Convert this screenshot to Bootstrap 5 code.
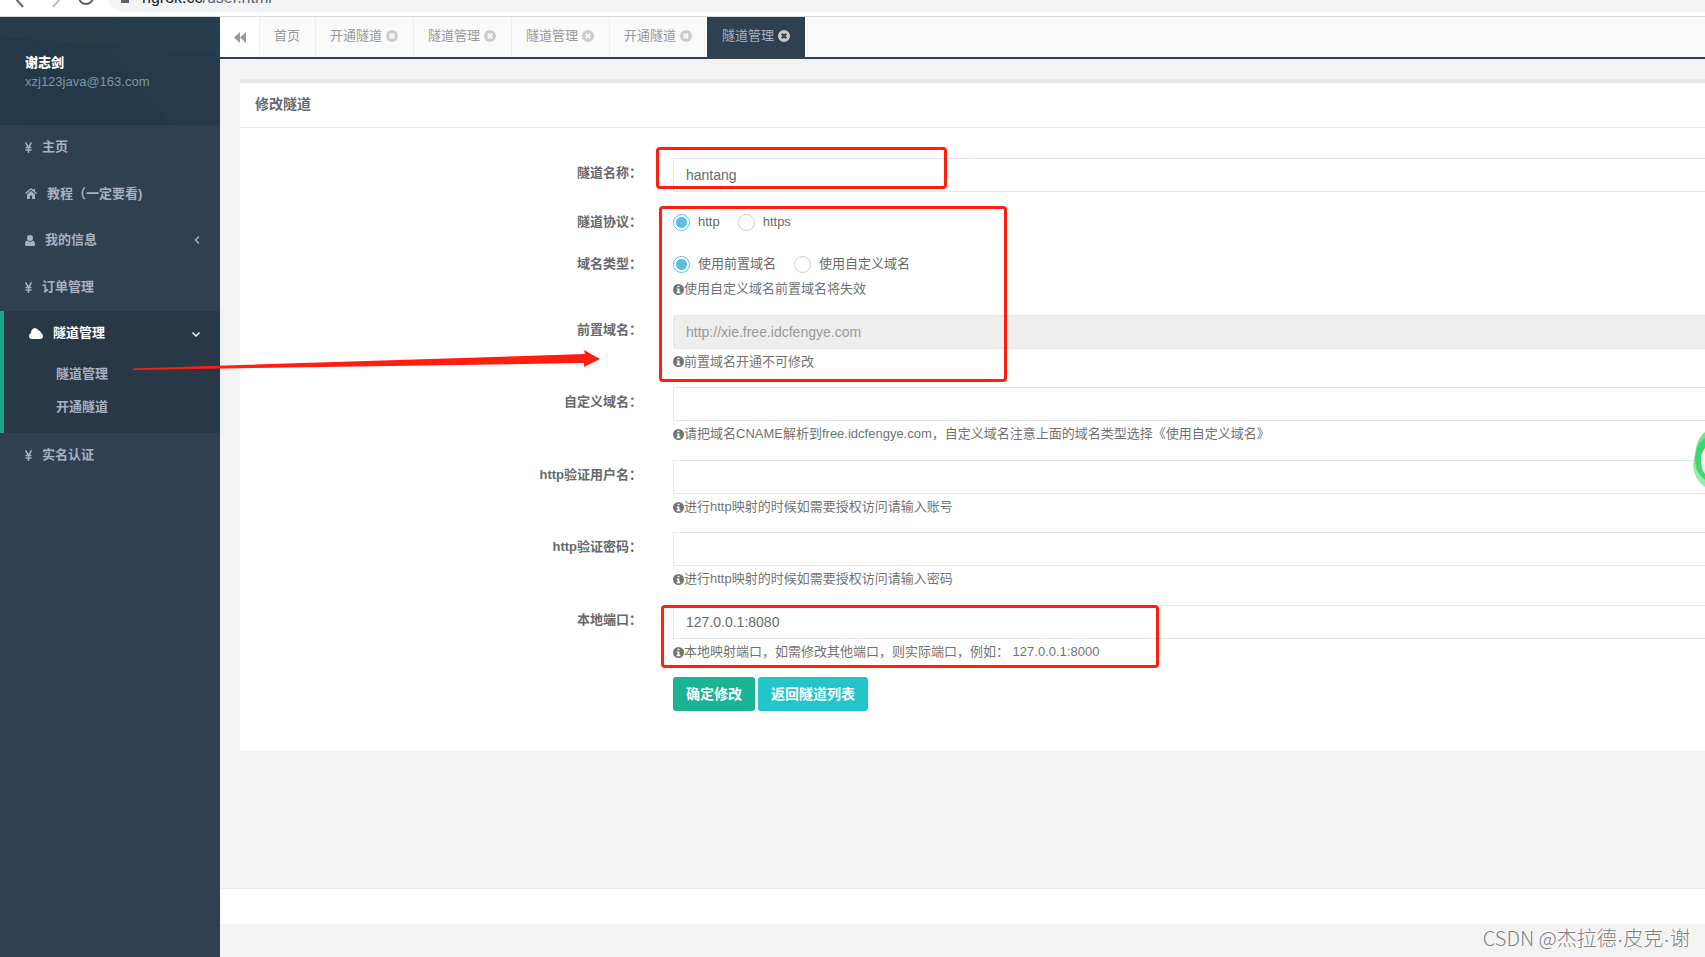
<!DOCTYPE html>
<html lang="zh-CN">
<head>
<meta charset="utf-8">
<meta name="viewport" content="width=device-width, initial-scale=1">
<title>隧道管理</title>
<link href="https://cdn.jsdelivr.net/npm/bootstrap@5.3.0/dist/css/bootstrap.min.css" rel="stylesheet">
<style>
body{font-family:"Liberation Sans","Noto Sans CJK SC",sans-serif;font-size:13px;line-height:1.43;color:#676a6c;background:#f3f3f4;overflow-x:hidden}
a{text-decoration:none;color:inherit}
.browser-bar{height:17px;border-bottom:1px solid #d6d8da;padding:0 0 4px 14px}
.browser-bar .address{height:30px;border-radius:15px 0 0 15px;background:#f1f3f4;font-size:16px;color:#5f6368;padding:2px 0 0 13px;gap:13px}
.browser-bar b{font-weight:400;color:#202124}
.sidebar{width:220px;background:#2f4050;color:#a7b1c2;font-weight:600}
.profile{height:108px;background:#263949;padding:37px 25px 0}
.profile svg{z-index:0}
.profile a{z-index:1}
.profile .mail{color:#8095a8;font-weight:400}
.menu-link{padding:13px 20px 15px 25px;gap:10px}
.menu-item.active{background:#293846;border-left:4px solid #19aa8d;padding-bottom:9px}
.menu-item.active .menu-link{color:#fff}
.submenu a{height:33px;padding-left:52px}
.tabs{height:42px;background:#fafafa;border-bottom:2px solid #2f4050;color:#999}
.tabs .back{width:39px;background:#fff;border:0;color:#999}
.tabs .page-tab{padding:0 15px 2px 14px;border-left:1px solid #eee;gap:4px}
.tabs .page-tab.active{background:#2f4050;border-color:#2f4050;color:#a7b1c2}
.close-ico{color:#ccc}
.workarea{padding:20px 0 0 20px}
.panel{background:#fff;border-top:4px solid #e7eaec}
.panel-title{font-size:14px;font-weight:600;line-height:20px;padding:11px 15px 13px;border-bottom:1px solid #e7eaec;margin:0}
.panel-form{padding:30px 0 25px;overflow:hidden}
.field{display:flex;margin-bottom:15px}
.field-name{flex:0 0 433px;padding:6px 34px 0 0;text-align:right;font-weight:600}
.field-name span{margin-right:-3px}
.field-body{flex:1;min-width:0;margin-right:-2px}
.field .form-control{height:34px;border:1px solid #e5e6e7;border-radius:1px;padding:6px 12px;font-size:14px;line-height:20px;color:#676a6c}
.field .form-control:disabled{background:#eee;color:#999}
.choices{height:27px;padding-top:4px;gap:18px}
.choice{gap:8px}
.choice .form-check-input{width:17px;height:17px;margin:0;border:1px solid #ccc;box-shadow:none}
.choice .form-check-input:checked{border-color:#5bc0de;background:#fff radial-gradient(circle,#5bc0de 5px,#fff 6px)}
.hint{padding:4px 0 1px;color:#737373}
.act{height:34px;border:0;border-radius:3px;color:#fff;font-size:14px;line-height:20px;padding:6px 13px;font-weight:600}
.act-save{background:#1ab394}
.act-list{background:#23c6c8}
.actions{gap:3px}
.foot{height:36px;background:#fff;border-top:1px solid #e7eaec}
.credit{height:33px;padding-right:15px;font:300 20px/28px "Liberation Sans","Noto Sans CJK SC",sans-serif;color:#808080;text-shadow:-1px -1px 0 #fff}
.credit span{font-family:"Noto Sans CJK SC",sans-serif}
.note{border:3px solid #ff1e10;border-radius:4px;pointer-events:none}
.note-name{left:656px;top:147px;width:291px;height:42px}
.note-domain{left:659px;top:206px;width:348px;height:176px}
.note-port{left:661px;top:605px;width:498px;height:63px}
.pointer{left:133px;top:349px}
.bubble{right:0;top:430px}
</style>
</head>
<body>
<div class="position-relative min-vh-100 d-flex flex-column overflow-hidden">
<header class="browser-bar bg-white d-flex align-items-end overflow-hidden">
  <svg width="94" height="24" fill="none" stroke="#5f6368" stroke-width="2" class="flex-shrink-0"><path d="m2 11 7 8"/><path d="m39 19 7-8" stroke="#bbb"/><circle cx="72" cy="9" r="7"/></svg>
  <div class="address d-flex align-items-center flex-grow-1">
    <svg width="8" height="18"><path fill="#5f6368" d="M0 5h8v9H0z"/></svg>
    <span><b>ngrok.cc</b>/user.html</span>
  </div>
</header>
<div class="d-flex flex-grow-1">
  <nav class="sidebar flex-shrink-0">
    <div class="profile position-relative">
      <svg class="position-absolute top-0 start-0 w-100 h-100" viewBox="0 0 220 108" preserveAspectRatio="none"><path fill="#283d4c" d="M120 0h100v38L100 28z"/><path fill="#293c4a" d="M0 0h120l-20 28L0 20z"/><path fill="#253848" d="M0 20l100 8 72 80H22z"/><path fill="#263a4a" d="M100 28l120 10v70h-48z"/></svg>
      <a href="#" class="d-block position-relative"><strong class="d-block text-white">谢志剑</strong><span class="mail d-block">xzj123java@163.com</span></a>
    </div>
    <ul class="list-unstyled mb-0">
      <li class="menu-item"><a href="#" class="menu-link d-flex align-items-center"><svg width="7" height="11" fill="none" stroke="currentColor" stroke-width="1.5"><path d="M.5.5l3 5 3-5M3.500 5v6M.5 5.500h6M.5 8h6"/></svg>主页</a></li>
      <li class="menu-item"><a href="#" class="menu-link d-flex align-items-center"><svg width="12" height="11" fill="currentColor"><path d="M6 0 0 5l.8 1L6 1.800 11.200 6l.8-1-2-1.700V.7H8.500V2zM2 6.200V11h3V7.500h2V11h3V6.200L6 3z"/></svg>教程（一定要看)</a></li>
      <li class="menu-item"><a href="#" class="menu-link d-flex align-items-center"><svg width="10" height="11" fill="currentColor"><circle cx="5" cy="3" r="3"/><path d="M2 5.500Q5 8 8 5.500q2 .5 2 4 0 1.500-1.500 1.500h-7Q0 11 0 9.500q0-3.500 2-4z"/></svg>我的信息<svg class="ms-auto" width="8" height="10" fill="none" stroke="currentColor" stroke-width="1.500"><path d="M7 1.500 3.500 5 7 8.500"/></svg></a></li>
      <li class="menu-item"><a href="#" class="menu-link d-flex align-items-center"><svg width="7" height="11" fill="none" stroke="currentColor" stroke-width="1.5"><path d="M.5.5l3 5 3-5M3.500 5v6M.5 5.500h6M.5 8h6"/></svg>订单管理</a></li>
      <li class="menu-item active"><a href="#" class="menu-link d-flex align-items-center"><svg width="14" height="11" fill="currentColor"><path d="M3 11Q0 11 0 8q0-2 2-3Q2 1 5.500 0 8.500 0 9.500 2.500q2-.5 2.500 2.500 2 .8 2 3 0 3-3 3z"/></svg>隧道管理<svg class="ms-auto" width="8" height="8" fill="none" stroke="currentColor" stroke-width="1.500"><path d="M.5 2.500 4 6l3.500-3.500"/></svg></a>
        <div class="submenu"><a href="#" class="d-flex align-items-center">隧道管理</a><a href="#" class="d-flex align-items-center">开通隧道</a></div>
      </li>
      <li class="menu-item"><a href="#" class="menu-link d-flex align-items-center"><svg width="7" height="11" fill="none" stroke="currentColor" stroke-width="1.5"><path d="M.5.5l3 5 3-5M3.500 5v6M.5 5.500h6M.5 8h6"/></svg>实名认证</a></li>
    </ul>
  </nav>
  <main class="flex-grow-1 d-flex flex-column overflow-hidden">
    <svg class="d-none">
      <symbol id="close" viewBox="0 0 12 12"><path fill="currentColor" fill-rule="evenodd" d="M6 0a6 6 0 1 0 0 12A6 6 0 0 0 6 0zM4.500 3 6 4.500 7.500 3 9 4.500 7.500 6 9 7.500 7.500 9 6 7.500 4.500 9 3 7.500 4.500 6 3 4.500z"/></symbol>
      <symbol id="info" viewBox="0 0 12 12"><path fill="currentColor" fill-rule="evenodd" d="M6 0a6 6 0 1 0 0 12A6 6 0 0 0 6 0zM5 1.800h2v1.700H5zM4 4.800h3V8.500h1V10H4V8.500h1V6H4z"/></symbol>
    </svg>
    <div class="tabs d-flex">
      <button type="button" class="back d-flex align-items-center justify-content-center p-0" aria-label="向左"><svg width="12" height="11" fill="currentColor"><path d="M6 0v11L0 5.500zM12 0v11L6 5.500z"/></svg></button>
      <a href="#" class="page-tab d-flex align-items-center">首页</a>
      <a href="#" class="page-tab d-flex align-items-center">开通隧道<svg class="close-ico" width="12" height="12"><use href="#close"/></svg></a>
      <a href="#" class="page-tab d-flex align-items-center">隧道管理<svg class="close-ico" width="12" height="12"><use href="#close"/></svg></a>
      <a href="#" class="page-tab d-flex align-items-center">隧道管理<svg class="close-ico" width="12" height="12"><use href="#close"/></svg></a>
      <a href="#" class="page-tab d-flex align-items-center">开通隧道<svg class="close-ico" width="12" height="12"><use href="#close"/></svg></a>
      <a href="#" class="page-tab active d-flex align-items-center">隧道管理<svg class="close-ico" width="12" height="12"><use href="#close"/></svg></a>
    </div>
    <div class="workarea flex-grow-1">
      <section class="panel">
        <h5 class="panel-title">修改隧道</h5>
        <form class="panel-form">
          <div class="field"><label class="field-name" for="name"><span>隧道名称：</span></label><div class="field-body"><input id="name" class="form-control" type="text" value="hantang"></div></div>
          <div class="field"><div class="field-name" id="proto"><span>隧道协议：</span></div><div class="field-body" role="radiogroup" aria-labelledby="proto"><div class="choices d-flex">
            <label class="choice d-flex align-items-center"><input class="form-check-input" type="radio" name="proto" checked>http</label>
            <label class="choice d-flex align-items-center"><input class="form-check-input" type="radio" name="proto">https</label></div></div></div>
          <div class="field"><div class="field-name" id="kind"><span>域名类型：</span></div><div class="field-body" role="radiogroup" aria-labelledby="kind"><div class="choices d-flex">
            <label class="choice d-flex align-items-center"><input class="form-check-input" type="radio" name="kind" checked>使用前置域名</label>
            <label class="choice d-flex align-items-center"><input class="form-check-input" type="radio" name="kind">使用自定义域名</label></div>
            <div class="hint d-flex align-items-center"><svg width="11" height="11"><use href="#info"/></svg>使用自定义域名前置域名将失效</div></div></div>
          <div class="field"><label class="field-name" for="prefix"><span>前置域名：</span></label><div class="field-body"><input id="prefix" class="form-control" type="text" value="http://xie.free.idcfengye.com" disabled>
            <div class="hint d-flex align-items-center"><svg width="11" height="11"><use href="#info"/></svg>前置域名开通不可修改</div></div></div>
          <div class="field"><label class="field-name" for="custom"><span>自定义域名：</span></label><div class="field-body"><input id="custom" class="form-control" type="text">
            <div class="hint d-flex align-items-center"><svg width="11" height="11"><use href="#info"/></svg>请把域名CNAME解析到free.idcfengye.com，自定义域名注意上面的域名类型选择《使用自定义域名》</div></div></div>
          <div class="field"><label class="field-name" for="user"><span>http验证用户名：</span></label><div class="field-body"><input id="user" class="form-control" type="text">
            <div class="hint d-flex align-items-center"><svg width="11" height="11"><use href="#info"/></svg>进行http映射的时候如需要授权访问请输入账号</div></div></div>
          <div class="field"><label class="field-name" for="pass"><span>http验证密码：</span></label><div class="field-body"><input id="pass" class="form-control" type="text">
            <div class="hint d-flex align-items-center"><svg width="11" height="11"><use href="#info"/></svg>进行http映射的时候如需要授权访问请输入密码</div></div></div>
          <div class="field"><label class="field-name" for="port"><span>本地端口：</span></label><div class="field-body"><input id="port" class="form-control" type="text" value="127.0.0.1:8080">
            <div class="hint d-flex align-items-center"><svg width="11" height="11"><use href="#info"/></svg>本地映射端口，如需修改其他端口，则实际端口，例如： 127.0.0.1:8000</div></div></div>
          <div class="field"><div class="field-name"></div><div class="field-body actions d-flex"><button type="button" class="act act-save">确定修改</button><button type="button" class="act act-list">返回隧道列表</button></div></div>
        </form>
      </section>
    </div>
    <div class="foot"></div>
    <div class="credit text-end"><span>CSDN @</span>杰拉德·皮克·谢</div>
  </main>
</div>
<div class="note note-name position-absolute"></div>
<div class="note note-domain position-absolute"></div>
<div class="note note-port position-absolute"></div>
<svg class="pointer position-absolute pe-none" width="468" height="22"><path fill="#ff1e10" d="M0 19.500 452 5l-1-4 16 9-16 8v-4L0 21z"/></svg>
<svg class="bubble position-absolute" width="12" height="60"><path fill="#9aeab0" d="M12 8Q0 20 0 36q1 13 12 21z"/><path fill="#74e094" d="M12 2Q2 10 2 30l10-5z"/><path fill="#3fd56f" d="M12 8Q2 15 2 30q0 12 10 20z"/><path fill="#f6f6f6" d="M12 18q-4 5-4 12 0 9 4 14z"/></svg>
</div>
<script src="https://cdn.jsdelivr.net/npm/bootstrap@5.3.0/dist/js/bootstrap.bundle.min.js"></script>
</body>
</html>
